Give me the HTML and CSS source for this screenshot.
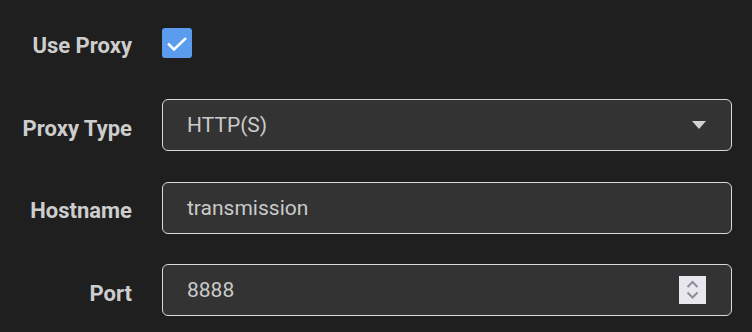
FILE: index.html
```html
<!DOCTYPE html>
<html lang="en">
<head>
<meta charset="utf-8">
<title>Proxy Settings</title>
<link rel="stylesheet" href="styles.css">
</head>
<body>
<form class="form">
  <label class="label" for="use-proxy">Use Proxy</label>
  <div class="cell">
    <span class="checkbox" id="use-proxy" role="checkbox" aria-checked="true">
      <svg viewBox="0 0 30 30" width="30" height="30"><path d="M7 16.5 L12 21.5 L23 11" fill="none" stroke="#ffffff" stroke-width="2.6" stroke-linecap="square"/></svg>
    </span>
  </div>

  <label class="label">Proxy Type</label>
  <div class="cell">
    <div class="field">
      <span class="value">HTTP(S)</span>
      <svg class="caret" viewBox="0 0 14 8" width="14" height="8"><path d="M0 0 H14 L7 8 Z" fill="#d2d2d2"/></svg>
    </div>
  </div>

  <label class="label">Hostname</label>
  <div class="cell">
    <div class="field">
      <span class="value">transmission</span>
    </div>
  </div>

  <label class="label">Port</label>
  <div class="cell">
    <div class="field">
      <span class="value">8888</span>
      <span class="spinner">
        <svg viewBox="0 0 27 28" width="27" height="28"><path d="M8.5 11 L13.5 6 L18.5 11 M8.5 16.5 L13.5 21.5 L18.5 16.5" fill="none" stroke="#8f8d9b" stroke-width="2"/></svg>
      </span>
    </div>
  </div>
</form>
</body>
</html>
```
FILE: styles.css
```css
html, body {
  margin: 0;
  padding: 0;
  background: #1f1f1f;
  width: 752px;
  height: 332px;
  overflow: hidden;
}

.form {
  display: grid;
  grid-template-columns: 112px 1fr;
  grid-auto-rows: 52px;
  column-gap: 30px;
  row-gap: 30.5px;
  padding: 16.5px 20px 0 20px;
  font-family: Roboto, "Liberation Sans", sans-serif;
}

.label {
  box-sizing: border-box;
  display: flex;
  align-items: center;
  justify-content: flex-end;
  padding-top: 6px;
  font-size: 22px;
  font-weight: 700;
  color: #cdcdcd;
  white-space: nowrap;
}

.cell {
  display: flex;
  align-items: center;
}

.checkbox {
  display: block;
  width: 30px;
  height: 30px;
  border-radius: 3px;
  background: #5b9cef;
}

.checkbox svg {
  display: block;
}

.field {
  box-sizing: border-box;
  flex: 1;
  height: 52px;
  display: flex;
  align-items: center;
  padding: 0 25px 0 24px;
  background: #333333;
  border: 1px solid #d9d9d9;
  border-radius: 6px;
}

.value {
  flex: 1;
  font-size: 21px;
  color: #cacaca;
}

.caret {
  display: block;
}

.spinner {
  display: block;
  width: 27px;
  height: 28px;
  background: #e8e7ed;
}

.spinner svg {
  display: block;
}
```
